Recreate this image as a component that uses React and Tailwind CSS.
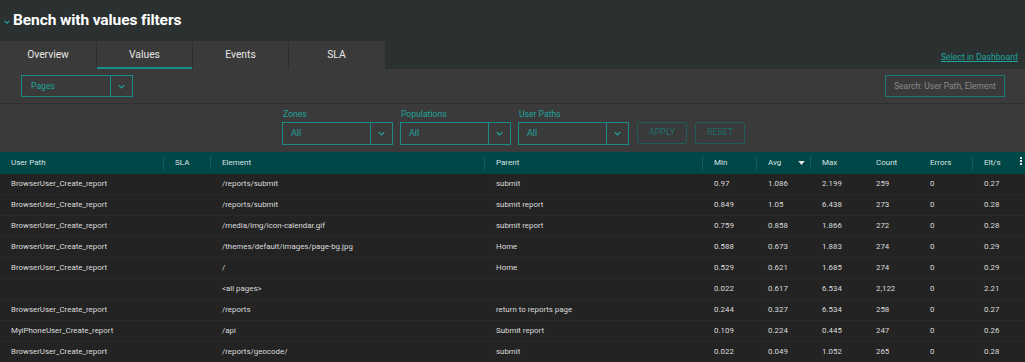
import React from "react";

const rows = [
  ["BrowserUser_Create_report", "", "/reports/submit", "submit", "0.97", "1.086", "2.199", "259", "0", "0.27"],
  ["BrowserUser_Create_report", "", "/reports/submit", "submit report", "0.849", "1.05", "6.438", "273", "0", "0.28"],
  ["BrowserUser_Create_report", "", "/media/img/icon-calendar.gif", "submit report", "0.759", "0.858", "1.866", "272", "0", "0.28"],
  ["BrowserUser_Create_report", "", "/themes/default/images/page-bg.jpg", "Home", "0.588", "0.673", "1.883", "274", "0", "0.29"],
  ["BrowserUser_Create_report", "", "/", "Home", "0.529", "0.621", "1.685", "274", "0", "0.29"],
  ["", "", "<all pages>", "", "0.022", "0.617", "6.534", "2,122", "0", "2.21"],
  ["BrowserUser_Create_report", "", "/reports", "return to reports page", "0.244", "0.327", "6.534", "258", "0", "0.27"],
  ["MyiPhoneUser_Create_report", "", "/api", "Submit report", "0.109", "0.224", "0.445", "247", "0", "0.26"],
  ["BrowserUser_Create_report", "", "/reports/geocode/", "submit", "0.022", "0.049", "1.052", "265", "0", "0.28"],
];

const widths = ["w-[164px]", "w-[47px]", "w-[274px]", "w-[218px]", "w-[54px]", "w-[54px]", "w-[54px]", "w-[54px]", "w-[54px]", "flex-1"];

const Chevron = ({ className = "" }) => (
  <svg viewBox="0 0 10 6" className={className} fill="none" stroke="currentColor" strokeWidth="1.8">
    <path d="M1 1l4 4 4-4" />
  </svg>
);

function Select({ w = "w-[111px]", text = "All" }) {
  return (
    <div className={`flex h-[23px] ${w} border border-[#1a8a86]`}>
      <div className="flex-1 flex items-center pl-[8px] text-[9px] text-[#1fa39d]">{text}</div>
      <div className="w-[22px] border-l border-[#1a8a86] flex items-center justify-center text-[#1fa39d]">
        <Chevron className="w-[7px] h-[5px]" />
      </div>
    </div>
  );
}

export default function App() {
  const headers = ["User Path", "SLA", "Element", "Parent", "Min", "Avg", "Max", "Count", "Errors", "Elt/s"];
  const dividers = [true, true, true, true, true, true, false, false, true, false];
  return (
    <div className="w-[1025px] h-[362px] overflow-hidden bg-[#2b3131] font-['Roboto',sans-serif]">
      {/* title */}
      <div className="h-[41px] flex items-center pl-[4px]">
        <Chevron className="w-[6px] h-[4px] text-[#1fa39d] mt-[2px]" />
        <span className="ml-[3px] text-white font-bold text-[15.5px] tracking-[-0.1px] leading-none">Bench with values filters</span>
      </div>
      {/* tabs */}
      <div className="flex h-[28px]">
        {["Overview", "Values", "Events", "SLA"].map((t, i) => (
          <div
            key={t}
            className={`w-[96px] bg-[#3a3a3a] flex items-center justify-center text-[10.3px] text-[#e6e6e6] relative ${i > 0 ? "border-l border-[#2e2e2e]" : ""}`}
          >
            {t}
            {t === "Values" && <div className="absolute left-0 right-0 bottom-0 h-[2px] bg-[#12908b]" />}
          </div>
        ))}
        <div className="w-[1px] bg-[#3a3a3a]" />
        <div className="flex-1 flex items-end justify-end pr-[7px] pb-[5px]">
          <span className="text-[8.7px] text-[#1fa39d] underline">Select in Dashboard</span>
        </div>
      </div>
      {/* toolbar */}
      <div className="h-[35px] bg-[#3a3a3a] flex items-center justify-between pl-[21px] pr-[20px] border-b border-[#303030]">
        <div className="flex h-[22px] w-[112px] border border-[#1a8a86]">
          <div className="flex-1 flex items-center pl-[9px] text-[8.6px] text-[#1fa39d]">Pages</div>
          <div className="w-[22px] border-l border-[#1a8a86] flex items-center justify-center text-[#1fa39d]">
            <Chevron className="w-[7px] h-[5px]" />
          </div>
        </div>
        <div className="h-[22px] w-[120px] border border-[#1a7a76] flex items-center pl-[8px] text-[8.5px] text-[#8a8a8a] whitespace-nowrap overflow-hidden">
          Search: User Path, Element
        </div>
      </div>
      {/* filters */}
      <div className="h-[48px] bg-[#3a3a3a] flex items-start pl-[282px] pt-[6px] gap-[7px]">
        {["Zones", "Populations", "User Paths"].map((l) => (
          <div key={l} className="flex flex-col">
            <div className="text-[8.6px] text-[#1fa39d] leading-none h-[12px] pl-[1px]">{l}</div>
            <Select />
          </div>
        ))}
        <div className="flex gap-[8px] mt-[12px] ml-[1px]">
          <div className="w-[50px] h-[22px] border border-[#1f5d5b] rounded-[2px] flex items-center justify-center text-[8.8px] text-[#1d706c]">APPLY</div>
          <div className="w-[50px] h-[22px] border border-[#1f5d5b] rounded-[2px] flex items-center justify-center text-[8.8px] text-[#1d706c]">RESET</div>
        </div>
      </div>
      {/* table */}
      <div className="bg-[#232323]">
        <div className="flex h-[22px] bg-[#004747] items-center text-[8px] text-[#d8e4e4]">
          {headers.map((h, i) => (
            <div
              key={h}
              className={`${widths[i]} h-full flex items-center pl-[11px] relative ${dividers[i] ? "after:content-[''] after:absolute after:right-0 after:top-[4px] after:bottom-[4px] after:w-[1px] after:bg-[#0f5e5e]" : ""}`}
            >
              {h}
              {h === "Avg" && (
                <svg viewBox="0 0 8 5" className="absolute right-[6px] top-[9px] w-[7px] h-[4px]" fill="#e6e6e6">
                  <path d="M0 0h8L4 5z" />
                </svg>
              )}
              {h === "Elt/s" && (
                <div className="absolute right-[3px] top-[5px] flex flex-col gap-[1px]">
                  <div className="w-[2px] h-[2px] bg-[#e6e6e6]" />
                  <div className="w-[2px] h-[2px] bg-[#e6e6e6]" />
                  <div className="w-[2px] h-[2px] bg-[#e6e6e6]" />
                </div>
              )}
            </div>
          ))}
        </div>
        {rows.map((r, ri) => (
          <div key={ri} className="flex h-[21px] items-center text-[7.9px] text-[#dcdcdc] border-b border-[#2a2a2a]">
            {r.map((c, ci) => (
              <div key={ci} className={`${widths[ci]} pl-[11px] whitespace-nowrap overflow-hidden`}>
                {c}
              </div>
            ))}
          </div>
        ))}
      </div>
    </div>
  );
}
